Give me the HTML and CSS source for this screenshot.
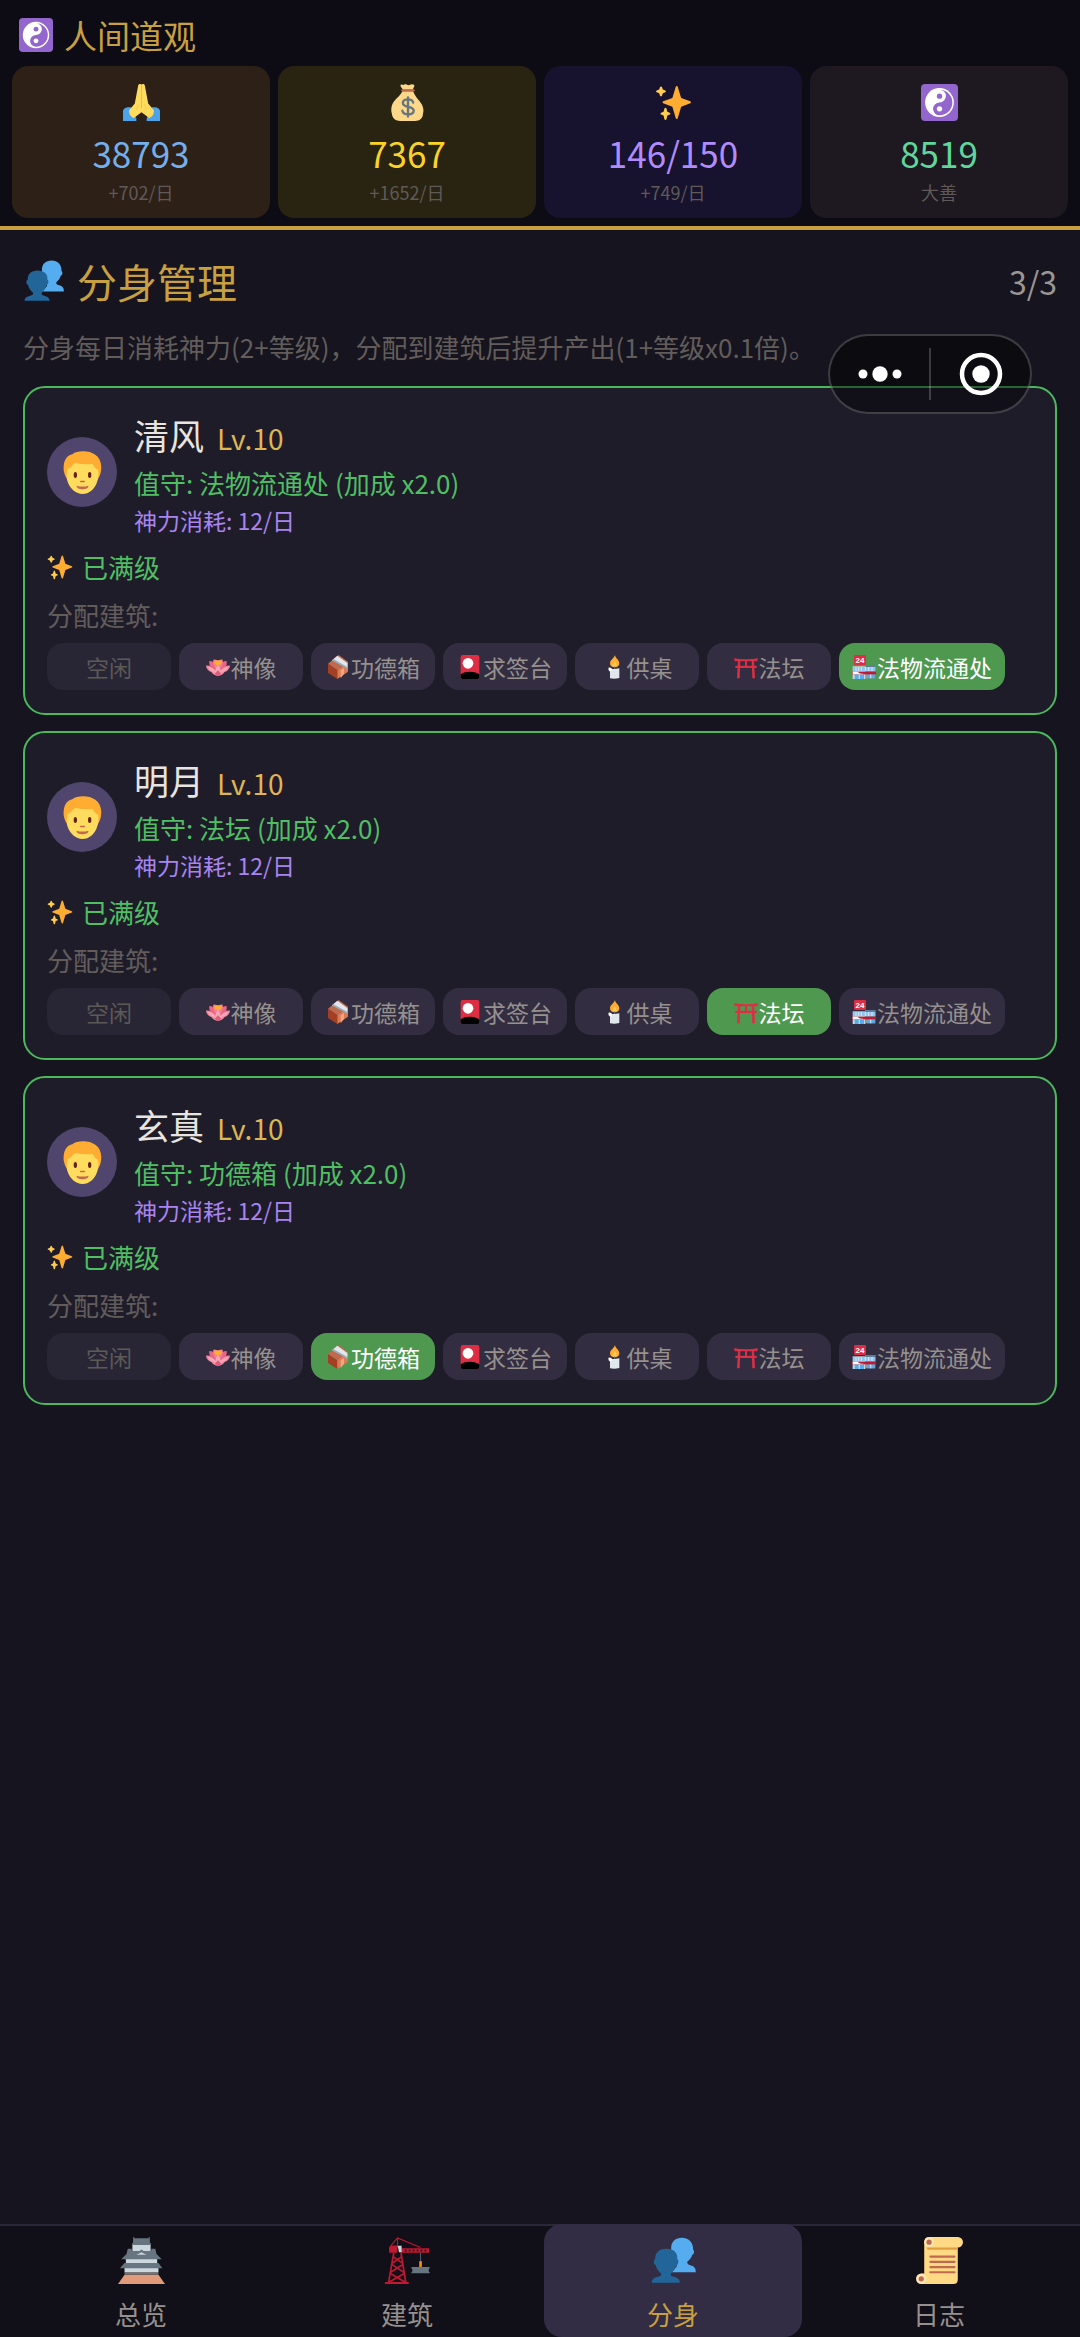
FILE: index.html
```html
<!DOCTYPE html>
<html lang="zh-CN">
<head>
    <meta charset="UTF-8">
    <meta name="viewport" content="width=device-width, initial-scale=1.0">
    <title>人间道观</title>
    <link rel="stylesheet" href="styles.css">
</head>
<body>
    <!-- Icon sprite -->
    <svg class="sprite" aria-hidden="true">
        <symbol id="i-yinyang" viewBox="0 0 36 36">
            <rect width="36" height="36" rx="4" fill="#9266cc"/>
            <circle cx="18" cy="18" r="14" fill="#fff"/>
            <path fill="#9266cc" d="M18 5.5A12.5 12.5 0 0 1 18 30.5A6.25 6.25 0 0 1 18 18A6.25 6.25 0 0 0 18 5.5z"/>
            <circle cx="18" cy="11.8" r="2.6" fill="#9266cc"/>
            <circle cx="18" cy="24.2" r="2.6" fill="#fff"/>
        </symbol>
        <symbol id="i-pray" viewBox="0 0 36 36">
            <path fill="#4da3ea" d="M0 36V26q1-3.500 5-3.500h3l5 11V36zM36 36V26q-1-3.500-5-3.500h-3l-5 11V36z"/>
            <path fill="#ffdc5d" d="M18 .5c-1-.8-2.700-.7-3.200.8L11.500 19 6 25.500c-.6 4 2 6.500 4.500 7.500L18 27.500l7.500 5.500c2.500-1 5.100-3.500 4.500-7.500L24.500 19 21.200 1.300C20.700-.2 19-.3 18 .5z"/>
            <path fill="none" stroke="#e9b23f" stroke-width=".8" d="M18 1.500v22"/>
            <path fill="none" stroke="#f5c548" stroke-width=".9" d="M15 20l-2 5M21 20l2 5"/>
        </symbol>
        <symbol id="i-money" viewBox="0 0 36 36">
            <path fill="#fdd888" d="M13 7C11 12 4.500 15 2.800 21c-.8 3-.8 5.500 0 8 .5 5 4 7 8 7h14.500c4.500 0 7.700-2.500 7.700-7 1-2.500.5-6-1-9C29.500 15.500 25 12 23.500 7z"/>
            <path fill="#fdd888" d="M11.500.8c1-.8 2 .6 3 0s2-.6 3 0 2 .6 3 0 2.500-.8 3.700 0c1.500 1-.7 3-.9 4.800H13.500C13 4 10.200 2.200 11.500.8z"/>
            <rect x="12" y="5" width="13" height="2.400" rx="1.200" fill="#bf6952"/>
            <path fill="none" stroke="#67757f" stroke-width="2.300" stroke-linecap="round" d="M18.500 13v18.500M23.500 18c-.5-2-2.500-3-5-3-3 0-5 1.300-5 3.500 0 5 10.500 2.500 10.500 7.300 0 2.300-2.200 3.700-5.200 3.700-3.200 0-5.300-1.200-5.800-3.500"/>
        </symbol>
        <symbol id="i-sparkles" viewBox="0 0 36 36">
            <path fill="#ffac33" d="M34.347 16.893l-8.899-3.294-3.323-10.891c-.128-.42-.517-.708-.956-.708-.439 0-.828.288-.956.708l-3.322 10.891-8.900 3.294c-.393.146-.653.519-.653.938 0 .418.260.793.653.938l8.895 3.293 3.324 11.223c.126.424.516.715.959.715.442 0 .833-.291.959-.716l3.324-11.223 8.896-3.293c.391-.144.652-.518.652-.937 0-.418-.261-.792-.653-.938z"/>
            <path fill="#ffcc4d" d="M14.347 27.894l-2.314-.856-.9-3.300c-.118-.436-.513-.738-.964-.738-.451 0-.846.302-.965.737l-.9 3.300-2.313.856c-.393.146-.653.520-.653.938 0 .418.260.793.653.938l2.301.853.907 3.622c.112.444.511.756.970.756.459 0 .858-.312.970-.757l.907-3.622 2.301-.853c.393-.144.653-.519.653-.937 0-.418-.260-.793-.653-.937zM10.009 6.231l-2.364-.875-.876-2.365c-.145-.393-.519-.653-.938-.653-.418 0-.792.260-.938.653l-.875 2.365-2.365.875c-.393.146-.653.520-.653.938 0 .418.260.793.653.938l2.365.875.875 2.365c.146.393.520.653.938.653.418 0 .792-.260.938-.653l.875-2.365 2.365-.875c.393-.146.653-.520.653-.938 0-.418-.260-.792-.653-.938z"/>
        </symbol>
        <symbol id="i-users" viewBox="0 0 36 36">
            <path fill="#55acee" d="M24.500.5c-5 0-8.300 3-8.300 8 0 6 2.500 9.500 4.300 11.300v2.700L16 27h19c.3-3.500-1.500-4.700-4-5.400-2-.5-2.500-1-2.500-2.600 2-1.500 3.300-3.500 3.800-5.500 1.500.3 2-3.300.7-4C33.300 4.500 30 .5 24.500.5z"/>
            <path fill="#226699" d="M12.500 9C7 9 3.800 12 4 17c-1.500.2-1.300 4 .3 4.500.7 3 2.500 5 4.200 6.500v1.500C7 31 1.300 30.500 1.300 35h21.500c0-4.500-5.300-4-6.800-5.500V28c2-1.700 3.800-4 4.300-6.500 1.700-.5 2-4.300.6-4.500C21.500 12 18 9 12.500 9z"/>
        </symbol>
        <symbol id="i-face" viewBox="0 0 36 36">
            <path fill="#ffac33" d="M18 .3C25 0 33.500 3.500 33.700 13c.1 6-1.700 9-3.700 12H6C4 22 1.500 18 2.300 12 3 7 5.500 3.500 9.500 2.800 11.500 1 15 .3 18 .3z"/>
            <path fill="#ffdc5d" d="M5.500 15c3-.5 4.500-4.500 6.500-5 5 1 9 1.200 14.500.8 1.500 2.200 2 4.200 4.500 4.700.8 3.500.3 7.500-1 11C28.200 31.500 23.500 36 18 36S8 31.500 6 27c-1.500-3.500-1.500-8-.5-12z"/>
            <ellipse cx="12" cy="20" rx="1.400" ry="2.500" fill="#662113"/>
            <ellipse cx="24" cy="20" rx="1.400" ry="2.500" fill="#662113"/>
            <path fill="none" stroke="#c1694f" stroke-width="1.300" stroke-linecap="round" d="M16.500 25.500h3"/>
            <path fill="#c1694f" d="M13 29c3 1 7 1 10 0 .3 4-10.300 4-10 0z"/>
        </symbol>
        <symbol id="i-lotus" viewBox="0 0 36 36">
            <path fill="#f4899f" d="M0 16c5-.5 8 1 10 4l16 0c2-3 5-4.500 10-4-.5 5-4 8-8 9.500-2 3.500-6 5.500-10 5.500S10 29 8 25.500C4 24 .5 21 0 16z"/>
            <path fill="#ea6585" d="M5 9c5 0 8 2 9 6h8c1-4 4-6 9-6 1 7-3 13-8 16H13C8 22 4 16 5 9z"/>
            <path fill="#f47f92" d="M11 7q4-1 7 2 3-3 7-2c1 6-1 12-7 17C12 19 10 13 11 7z"/>
            <path fill="#ffac33" d="M12 10q6-4 12 0-1 5-6 5t-6-5z"/>
            <path fill="#f9a7b7" d="M3 18c6 0 9 2 11 6 1-5 2-7 4-9 2 2 3 4 4 9 2-4 5-6 11-6-2 5-5 7-9 7-1 4-4 5-6 6-2-1-5-2-6-6-4 0-7-2-9-7z"/>
            <path fill="#dd5d7d" d="M13 28l5-5 5 5-5 4z"/>
        </symbol>
        <symbol id="i-box" viewBox="0 0 36 36">
            <path fill="#a33f22" d="M3 13l14 10v13L3 27z"/>
            <path fill="#d97b53" d="M17 22L33 10v15L17 36z"/>
            <path fill="#c1694f" d="M3 13L19 0l14 10-16 13z"/>
            <path fill="#e1e8ed" d="M9 8l8-7 15 11v7z"/>
            <path fill="#99aab5" d="M9 8l2-2 21 12v3z"/>
            <path fill="#f3a284" d="M22 23l5-4v9l-5 7z"/>
        </symbol>
        <symbol id="i-card" viewBox="0 0 36 36">
            <rect x="4" width="28" height="36" rx="3" fill="#dd2e44"/>
            <circle cx="15" cy="12.500" r="8" fill="#fff"/>
            <path fill="#000" d="M4 29c7-5 20-5 28 0v4q0 3-3 3H7q-3 0-3-3z"/>
        </symbol>
        <symbol id="i-candle" viewBox="0 0 36 36">
            <path fill="#ffac33" d="M19.500 0c.5 5 6.500 7 6.500 12.500 0 4-3 6-7 6s-7-2-7-6C12 7 18 5.500 19.500 0z"/>
            <path fill="#ffcc4d" d="M19 9c1 3 3 3.500 3 6 0 2-1 3-3 3s-3-1-3-3c0-2.500 2.500-3 3-6z"/>
            <path fill="#e1e8ed" d="M10 19l3 2 6 0 7-1v14.500q-7 2-14 .5V25l-2-2z"/>
            <path fill="#fff" d="M10 19q2-1 5 1.500l-1 4-4-2z"/>
            <path stroke="#66757f" stroke-width="1.500" d="M19 17v4"/>
        </symbol>
        <symbol id="i-torii" viewBox="0 0 36 36">
            <path fill="#dd2e44" d="M0 5q18 3 36 0l-1 4.500H1zM6 9h3.500l-1 26H4.500zM26.500 9H30l1.500 26h-4zM2 16h32v3.500H2zM16.500 9h3v8h-3z"/>
        </symbol>
        <symbol id="i-store" viewBox="0 0 36 36">
            <path fill="#8899a6" d="M20 15h15v20H20z"/>
            <path fill="#5f7d9a" d="M20 15h15v3H20z"/>
            <path fill="#ccd6dd" d="M1 17h19v19H1z"/>
            <path fill="#8fc4f0" d="M2 18h33v6H2z"/>
            <path stroke="#fff" stroke-width="1" d="M6 18v6M10 18v6M14 18v6M20 18v6M25 18v6M30 18v6"/>
            <path fill="#55acee" d="M4 29h14v7H4zM23 29h11v6H23z"/>
            <path fill="#ccd6dd" d="M10 29h2v7h-2zM27 29h2v6h-2z"/>
            <path fill="#be1931" d="M0 25h36v4H0z"/>
            <path fill="#fff" d="M1 25h8q1 3 8 3v1H1z"/>
            <rect x="3" width="18" height="15" rx="2" fill="#dd2e44"/>
            <text x="12" y="12" class="store-sign">24</text>
        </symbol>
        <symbol id="i-castle" viewBox="0 0 36 36">
            <path fill="#e19b7a" d="M5 29h26l5 7H0z"/>
            <path fill="#7a7370" d="M5 27h26v2H5z"/>
            <path fill="#ccd6dd" d="M11 5h14v6H11zM6 16h24v5H6zM5 23h26v4H5z"/>
            <path fill="#66757f" d="M11.700 0h.8v1h11V0h.8l.2 4.500 1 1.700H10.500l1-1.700zM7.500 9h3v1.800h15V9h3l1 4 4 4H2.500l4-4zM5 20h26l3 4H1.500z"/>
            <path fill="#ccd6dd" d="M13 13.500l5-3 5 3z"/>
            <path fill="#66757f" d="M11.500 14L18 9.500l6.500 4.500-2.500-.3-4-2-4 2z"/>
        </symbol>
        <symbol id="i-crane" viewBox="0 0 36 36">
            <path fill="none" stroke="#be1931" stroke-width=".8" d="M5 7l5.300-6.300L28 8M10.300.7V8"/>
            <path fill="none" stroke="#be1931" stroke-width="1.300" d="M7.500 12L3.500 35M13 12l3.700 23M7 15l7 5M13.500 15l-7 5M6 21l9 6M14.500 21l-9.500 6M5 28l11 6.500M15.500 28L4 34.500"/>
            <path fill="#be1931" d="M.7 34.500H19V36H.7zM3.800 8q.5-1.500 2.500-1.500h4V12H4zM13 8.700h21.500V12H13z"/>
            <path fill="#2b1722" d="M16 9.500h1.300v1.700H16zm3 0h1.300v1.700H19zm3 0h1.300v1.700H22zm3 0h1.300v1.700H25zm3 0h1.300v1.700H28zm3 0h1.300v1.700H31z"/>
            <path fill="#ccd6dd" d="M10.500 6.700h3v5h-2z"/>
            <path stroke="#66757f" stroke-width=".6" d="M28 12v7"/>
            <path fill="#f4900c" d="M27 18.500h2v5h-2z"/>
            <path fill="#66757f" d="M21 23h14v1l-.7.500v2l.7.500v.7H21V27l.7-.5v-2L21 24z"/>
        </symbol>
        <symbol id="i-scroll" viewBox="0 0 36 36">
            <path fill="#ffd983" d="M10 0h22a4 4 0 0 1 0 8v24.500Q32 36 28.500 36H4v-8h2.300V4Q6.300 0 10 0z"/>
            <path fill="#e39f3d" d="M8 8h24v1.700H9z"/>
            <circle cx="10" cy="4" r="3.700" fill="#ffe8b6"/>
            <circle cx="10" cy="4" r="2" fill="#c1694f"/>
            <circle cx="4" cy="32" r="4" fill="#ffe8b6"/>
            <circle cx="4" cy="32" r="2" fill="#c1694f"/>
            <path stroke="#c1694f" stroke-width="1.700" stroke-linecap="round" d="M11 15h18.500M11 19h18.500M11 23h18.500M11 27h18.500"/>
        </symbol>
    </svg>

    <header class="top-bar">
        <h1 class="app-title"><svg class="icon-title"><use href="#i-yinyang"/></svg>人间道观</h1>
        <div class="stats">
            <div class="stat incense">
                <svg class="stat-icon"><use href="#i-pray"/></svg>
                <div class="stat-value">38793</div>
                <div class="stat-rate">+702/日</div>
            </div>
            <div class="stat money">
                <svg class="stat-icon"><use href="#i-money"/></svg>
                <div class="stat-value">7367</div>
                <div class="stat-rate">+1652/日</div>
            </div>
            <div class="stat power">
                <svg class="stat-icon"><use href="#i-sparkles"/></svg>
                <div class="stat-value">146/150</div>
                <div class="stat-rate">+749/日</div>
            </div>
            <div class="stat karma">
                <svg class="stat-icon"><use href="#i-yinyang"/></svg>
                <div class="stat-value">8519</div>
                <div class="stat-rate">大善</div>
            </div>
        </div>
    </header>

    <!-- Mini program capsule -->
    <div class="capsule">
        <button class="capsule-btn" aria-label="更多">
            <svg width="46" height="46" viewBox="0 0 46 46" fill="#fff"><circle cx="6" cy="23" r="4.500"/><circle cx="23" cy="23" r="7.700"/><circle cx="40" cy="23" r="4.500"/></svg>
        </button>
        <button class="capsule-btn" aria-label="关闭">
            <svg width="46" height="46" viewBox="0 0 46 46"><circle cx="23" cy="23" r="19" fill="none" stroke="#fff" stroke-width="4.500"/><circle cx="23" cy="23" r="8.700" fill="#fff"/></svg>
        </button>
    </div>

    <main class="content">
        <div class="section-head">
            <h2 class="section-title"><svg class="icon-section"><use href="#i-users"/></svg>分身管理</h2>
            <span class="count">3/3</span>
        </div>
        <p class="desc">分身每日消耗神力(2+等级)，分配到建筑后提升产出(1+等级x0.1倍)。</p>

        <section class="clone-card">
            <div class="clone-head">
                <div class="avatar"><svg><use href="#i-face"/></svg></div>
                <div class="clone-info">
                    <h3 class="clone-name">清风<span class="level">Lv.10</span></h3>
                    <div class="duty">值守: 法物流通处 (加成 x2.0)</div>
                    <div class="cost">神力消耗: 12/日</div>
                </div>
            </div>
            <div class="max-level"><svg><use href="#i-sparkles"/></svg>已满级</div>
            <div class="assign-label">分配建筑:</div>
            <div class="chips">
                <button class="chip idle">空闲</button>
                <button class="chip"><svg><use href="#i-lotus"/></svg>神像</button>
                <button class="chip"><svg><use href="#i-box"/></svg>功德箱</button>
                <button class="chip"><svg><use href="#i-card"/></svg>求签台</button>
                <button class="chip"><svg><use href="#i-candle"/></svg>供桌</button>
                <button class="chip"><svg><use href="#i-torii"/></svg>法坛</button>
                <button class="chip active"><svg><use href="#i-store"/></svg>法物流通处</button>
            </div>
        </section>

        <section class="clone-card">
            <div class="clone-head">
                <div class="avatar"><svg><use href="#i-face"/></svg></div>
                <div class="clone-info">
                    <h3 class="clone-name">明月<span class="level">Lv.10</span></h3>
                    <div class="duty">值守: 法坛 (加成 x2.0)</div>
                    <div class="cost">神力消耗: 12/日</div>
                </div>
            </div>
            <div class="max-level"><svg><use href="#i-sparkles"/></svg>已满级</div>
            <div class="assign-label">分配建筑:</div>
            <div class="chips">
                <button class="chip idle">空闲</button>
                <button class="chip"><svg><use href="#i-lotus"/></svg>神像</button>
                <button class="chip"><svg><use href="#i-box"/></svg>功德箱</button>
                <button class="chip"><svg><use href="#i-card"/></svg>求签台</button>
                <button class="chip"><svg><use href="#i-candle"/></svg>供桌</button>
                <button class="chip active"><svg><use href="#i-torii"/></svg>法坛</button>
                <button class="chip"><svg><use href="#i-store"/></svg>法物流通处</button>
            </div>
        </section>

        <section class="clone-card">
            <div class="clone-head">
                <div class="avatar"><svg><use href="#i-face"/></svg></div>
                <div class="clone-info">
                    <h3 class="clone-name">玄真<span class="level">Lv.10</span></h3>
                    <div class="duty">值守: 功德箱 (加成 x2.0)</div>
                    <div class="cost">神力消耗: 12/日</div>
                </div>
            </div>
            <div class="max-level"><svg><use href="#i-sparkles"/></svg>已满级</div>
            <div class="assign-label">分配建筑:</div>
            <div class="chips">
                <button class="chip idle">空闲</button>
                <button class="chip"><svg><use href="#i-lotus"/></svg>神像</button>
                <button class="chip active"><svg><use href="#i-box"/></svg>功德箱</button>
                <button class="chip"><svg><use href="#i-card"/></svg>求签台</button>
                <button class="chip"><svg><use href="#i-candle"/></svg>供桌</button>
                <button class="chip"><svg><use href="#i-torii"/></svg>法坛</button>
                <button class="chip"><svg><use href="#i-store"/></svg>法物流通处</button>
            </div>
        </section>
    </main>

    <nav class="tab-bar">
        <a class="tab" href="#overview"><svg><use href="#i-castle"/></svg>总览</a>
        <a class="tab" href="#buildings"><svg><use href="#i-crane"/></svg>建筑</a>
        <a class="tab active" href="#clones"><svg><use href="#i-users"/></svg>分身</a>
        <a class="tab" href="#log"><svg><use href="#i-scroll"/></svg>日志</a>
    </nav>
</body>
</html>
```

FILE: styles.css
```css
* {
    margin: 0;
    padding: 0;
    box-sizing: border-box;
}

body {
    font-family: 'Noto Sans CJK SC', sans-serif;
    font-weight: 400;
    background: #16141e;
    color: #e8e4df;
    min-height: 100vh;
    display: flex;
    flex-direction: column;
    position: relative;
}

h1, h2, h3 {
    font-weight: 400;
}

button {
    font: inherit;
    border: none;
    cursor: pointer;
}

svg {
    display: block;
    flex-shrink: 0;
}

.sprite {
    display: none;
}

.store-sign {
    font: bold 12px 'Liberation Sans', sans-serif;
    fill: #fff;
    text-anchor: middle;
}

/* Header */
.top-bar {
    background: #0d0b14;
    border-bottom: 4px solid #c9a040;
    padding: 11px 12px 8px;
}

.app-title {
    display: flex;
    align-items: center;
    gap: 11px;
    padding-left: 7px;
    margin-bottom: 7px;
    font-size: 33px;
    line-height: 48px;
    color: #c9a040;
}

.icon-title {
    width: 34px;
    height: 34px;
}

.stats {
    display: grid;
    grid-template-columns: repeat(4, 1fr);
    gap: 8px;
}

.stat {
    display: flex;
    flex-direction: column;
    align-items: center;
    padding: 18px 8px 14px;
    border-radius: 16px;
}

.stat-icon {
    width: 37px;
    height: 37px;
    margin-bottom: 5px;
}

.stat-value {
    font-size: 35px;
    line-height: 54px;
}

.stat-rate {
    font-size: 18px;
    line-height: 24px;
    color: #5f5a58;
}

.incense { background: #2d2017; }
.money { background: #292412; }
.power { background: #17122d; }
.karma { background: #1e1820; }

.incense .stat-value { color: #74aeec; }
.money .stat-value { color: #fbd326; }
.power .stat-value { color: #b08cfa; }
.karma .stat-value { color: #5fd69c; }

/* Capsule floats over the page */
.capsule {
    position: absolute;
    top: 334px;
    right: 48px;
    width: 204px;
    height: 80px;
    display: flex;
    align-items: center;
    background: rgba(0, 0, 0, 0.45);
    border: 2px solid rgba(255, 255, 255, 0.2);
    border-radius: 40px;
}

.capsule-btn {
    flex: 1;
    height: 52px;
    display: flex;
    align-items: center;
    justify-content: center;
    background: none;
}

.capsule-btn + .capsule-btn {
    border-left: 2px solid rgba(255, 255, 255, 0.2);
}

/* Main content */
.content {
    flex: 1;
    padding: 22px 23px;
}

.section-head {
    display: flex;
    justify-content: space-between;
    align-items: center;
    margin-bottom: 18px;
}

.section-title {
    display: flex;
    align-items: center;
    gap: 12px;
    font-size: 40px;
    line-height: 58px;
    color: #c9a040;
}

.icon-section {
    width: 42px;
    height: 42px;
}

.count {
    font-size: 32px;
    line-height: 58px;
    color: #9b9693;
}

.desc {
    font-size: 26px;
    line-height: 38px;
    margin-bottom: 20px;
    color: #625d5b;
}

.clone-card {
    background: #1f1c2a;
    border: 2px solid #4cb85c;
    border-radius: 22px;
    padding: 19px 22px 23px;
    margin-bottom: 16px;
}

.clone-head {
    display: flex;
    align-items: center;
    gap: 17px;
}

.avatar {
    width: 70px;
    height: 70px;
    display: flex;
    align-items: center;
    justify-content: center;
    background: #50456c;
    border-radius: 50%;
}

.avatar svg {
    width: 43px;
    height: 43px;
}

.clone-name {
    font-size: 35px;
    line-height: 56px;
}

.level {
    margin-left: 13px;
    font-size: 28px;
    line-height: 1;
    color: #dfb651;
}

.duty {
    font-size: 26px;
    line-height: 40px;
    color: #4fbf63;
}

.cost {
    font-size: 23px;
    line-height: 34px;
    color: #a884f0;
}

.max-level {
    display: flex;
    align-items: center;
    gap: 9px;
    margin-top: 10px;
    font-size: 26px;
    line-height: 40px;
    color: #4fbf63;
}

.max-level svg {
    width: 26px;
    height: 26px;
}

.assign-label {
    margin-top: 8px;
    font-size: 26px;
    line-height: 40px;
    color: #625d5b;
}

.chips {
    display: flex;
    flex-wrap: wrap;
    gap: 8px;
    margin-top: 8px;
}

.chip {
    min-width: 124px;
    height: 47px;
    padding: 0 13px;
    display: flex;
    align-items: center;
    justify-content: center;
    gap: 1px;
    background: #322d40;
    border-radius: 16px;
    font-size: 23px;
    line-height: 34px;
    color: #96918e;
}

.chip svg {
    width: 24px;
    height: 24px;
}

.chip.idle {
    background: #282535;
    color: #5d5957;
}

.chip.active {
    background: #4f984f;
    color: #fff;
}

/* Bottom tabs */
.tab-bar {
    position: sticky;
    bottom: 0;
    display: grid;
    grid-template-columns: repeat(4, 1fr);
    gap: 8px;
    padding: 0 12px;
    background: #110f18;
    box-shadow: inset 0 2px #2b2738;
}

.tab {
    display: flex;
    flex-direction: column;
    align-items: center;
    gap: 10px;
    padding: 13px 0 3px;
    border-radius: 18px;
    font-size: 26px;
    line-height: 40px;
    color: #96918e;
    text-decoration: none;
}

.tab svg {
    width: 47px;
    height: 47px;
}

.tab.active {
    background: #322d44;
    color: #c9a040;
}
```
